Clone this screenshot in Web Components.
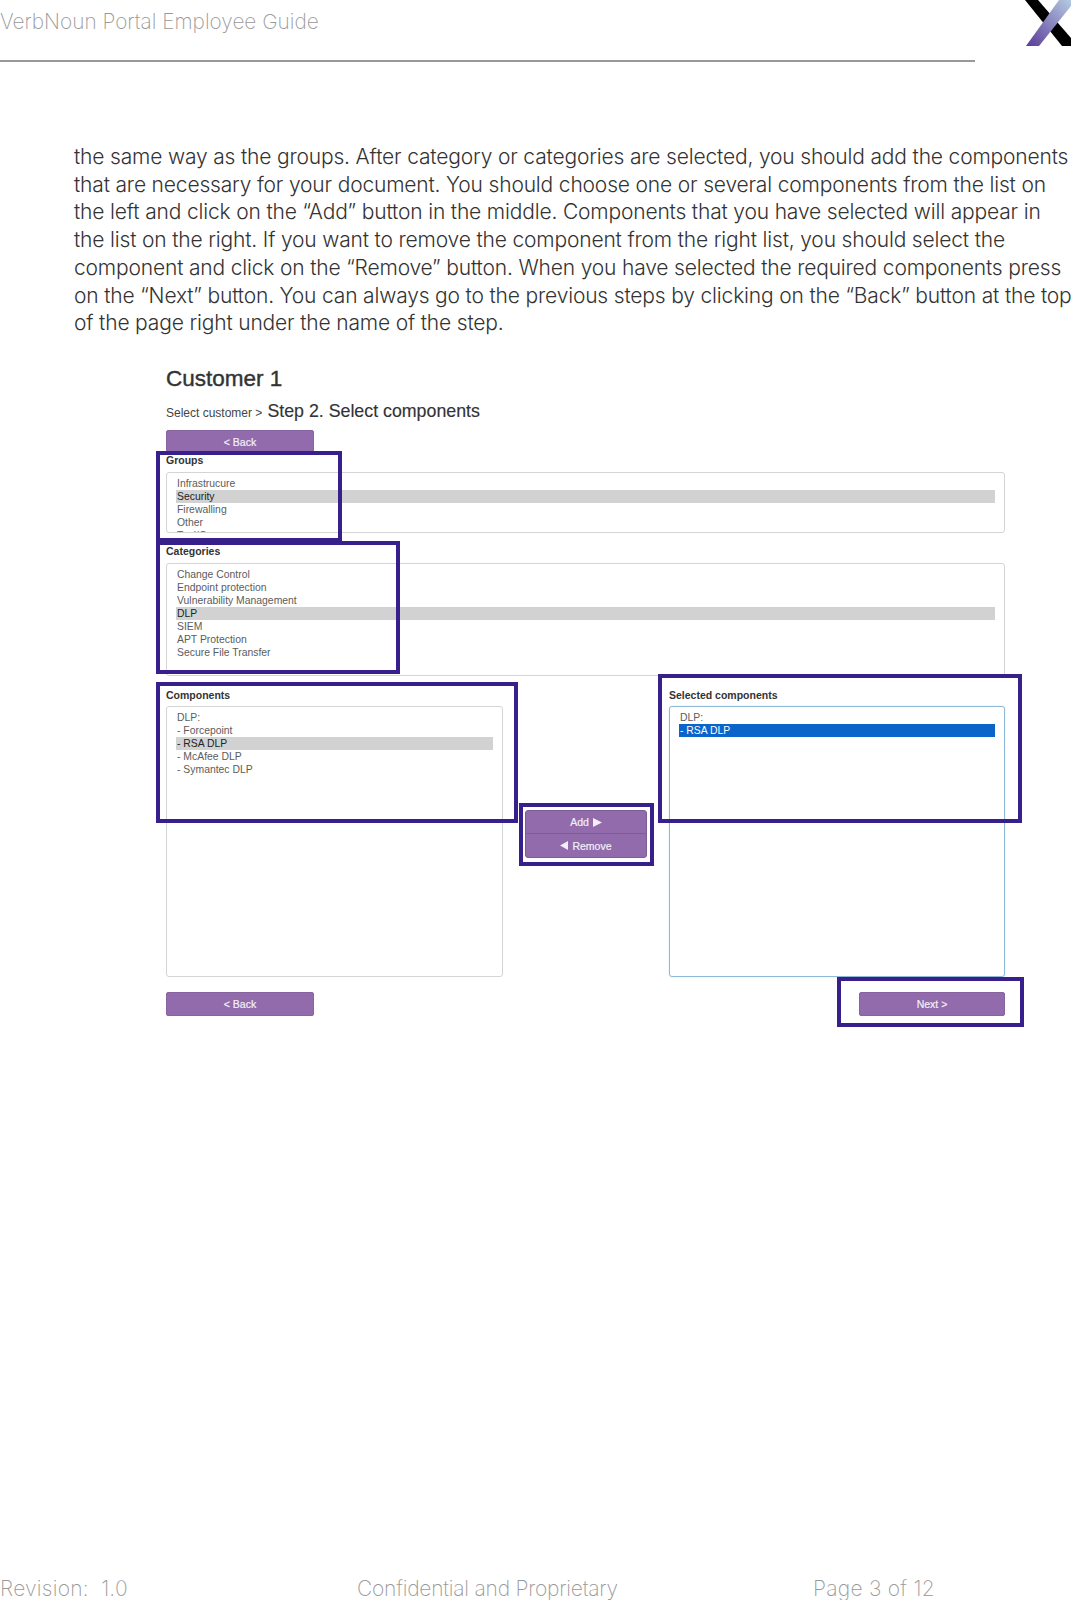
<!DOCTYPE html>
<html>
<head>
<meta charset="utf-8">
<title>VerbNoun Portal Employee Guide</title>
<style>
    html, body { margin: 0; padding: 0; background: #fff; }
    body { width: 1071px; height: 1600px; overflow: hidden; }
</style>
</head>
<body>
<guide-page>
    <guide-header slot="header">VerbNoun Portal Employee Guide</guide-header>
    <p>the same way as the groups. After category or categories are selected, you should add the components<br>that are necessary for your document. You should choose one or several components from the list on<br>the left and click on the “Add” button in the middle. Components that you have selected will appear in<br>the list on the right. If you want to remove the component from the right list, you should select the<br>component and click on the “Remove” button. When you have selected the required components press<br>on the “Next” button. You can always go to the previous steps by clicking on the “Back” button at the top<br>of the page right under the name of the step.</p>
    <wizard-shot>
        <wizard-list slot="groups" label="Groups" height="61">
            <list-option>Infrastrucure</list-option>
            <list-option selected>Security</list-option>
            <list-option>Firewalling</list-option>
            <list-option>Other</list-option>
            <list-option>Tool/C</list-option>
        </wizard-list>
        <wizard-list slot="categories" label="Categories" height="113">
            <list-option>Change Control</list-option>
            <list-option>Endpoint protection</list-option>
            <list-option>Vulnerability Management</list-option>
            <list-option selected>DLP</list-option>
            <list-option>SIEM</list-option>
            <list-option>APT Protection</list-option>
            <list-option>Secure File Transfer</list-option>
        </wizard-list>
        <wizard-list slot="components" label="Components" height="271" tight>
            <list-option>DLP:</list-option>
            <list-option>- Forcepoint</list-option>
            <list-option selected>- RSA DLP</list-option>
            <list-option>- McAfee DLP</list-option>
            <list-option>- Symantec DLP</list-option>
        </wizard-list>
        <wizard-list slot="chosen" label="Selected components" height="271" tight focused>
            <list-option>DLP:</list-option>
            <list-option active>- RSA DLP</list-option>
        </wizard-list>
    </wizard-shot>
    <guide-footer slot="footer"></guide-footer>
</guide-page>

<script>
class GuidePage extends HTMLElement {
    connectedCallback() {
        let shadow = this.attachShadow({ mode: "open" });
        shadow.innerHTML = `
            <style>
                :host {
                    display: flex;
                    flex-direction: column;
                    width: 1071px;
                    height: 1600px;
                    overflow: hidden;
                    font-family: "Inter", "Liberation Sans", sans-serif;
                    font-weight: 300;
                    color: #333;
                }
                ::slotted(p) {
                    margin: 143px 0 0 74px;
                    font-size: 21px;
                    letter-spacing: -0.17px;
                    line-height: 27.7px;
                    white-space: nowrap;
                }
                .footer { margin-top: auto; }
            </style>
            <slot name="header"></slot>
            <slot></slot>
            <div class="footer"><slot name="footer"></slot></div>
        `;
    }
}

class GuideHeader extends HTMLElement {
    connectedCallback() {
        let shadow = this.attachShadow({ mode: "open" });
        shadow.innerHTML = `
            <style>
                :host {
                    display: block;
                    position: relative;
                    height: 0;
                    font-size: 20.8px;
                    font-weight: 200;
                    color: #999;
                }
                .title { height: 60px; line-height: 44px; width: 975px; border-bottom: 2px solid #999; }
                svg { position: absolute; left: 1024px; top: 0; }
            </style>
            <div class="title"><slot></slot></div>
            <svg width="47" height="46" viewBox="0 0 47 46">
                <defs>
                    <linearGradient id="bar" x1="0" y1="1" x2="1" y2="0">
                        <stop offset="0" stop-color="#5a3a98"/>
                        <stop offset="1" stop-color="#b4cbe2"/>
                    </linearGradient>
                </defs>
                <path d="M1 0H14L47 38V46H38Z" fill="#000"/>
                <path d="M2 46H15L47 6V0H35Z" fill="url(#bar)"/>
            </svg>
        `;
    }
}

class GuideFooter extends HTMLElement {
    connectedCallback() {
        let shadow = this.attachShadow({ mode: "open" });
        shadow.innerHTML = `
            <style>
                :host {
                    display: grid;
                    grid-template-columns: 357px 456px 1fr;
                    height: 22px;
                    font-size: 21px;
                    font-weight: 200;
                    line-height: 22px;
                    color: #999;
                    white-space: pre;
                }
                .conf { letter-spacing: -0.22px; }
                .num { letter-spacing: 0.25px; }
            </style>
            <span class="num">Revision:  1.0</span>
            <span class="conf">Confidential and Proprietary</span>
            <span class="num">Page 3 of 12</span>
        `;
    }
}

class WizardButton extends HTMLElement {
    connectedCallback() {
        let shadow = this.attachShadow({ mode: "open" });
        shadow.innerHTML = `
            <style>
                :host {
                    display: flex;
                    align-items: center;
                    justify-content: center;
                    width: 148px;
                    height: 24px;
                    box-sizing: border-box;
                    background: #916bab;
                    border: 1px solid #8763a0;
                    border-radius: 2px;
                    color: #f4eff7;
                    font: 10.5px "Liberation Sans", sans-serif;
                    -webkit-text-stroke: 0.2px #f4eff7;
                }
                :host([short]) { width: 146px; }
            </style>
            <slot></slot>
        `;
    }
}

class ListOption extends HTMLElement {
    connectedCallback() {
        let shadow = this.attachShadow({ mode: "open" });
        shadow.innerHTML = `
            <style>
                :host {
                    display: block;
                    height: 13px;
                    line-height: 13px;
                    padding-left: 1px;
                    white-space: nowrap;
                    color: #5c5c5c;
                }
                :host([selected]) { background: #d2d2d2; color: #222; }
                :host([active]) { background: #0a64c9; color: #fff; }
            </style>
            <slot></slot>
        `;
    }
}

class WizardList extends HTMLElement {
    connectedCallback() {
        let shadow = this.attachShadow({ mode: "open" });
        shadow.innerHTML = `
            <style>
                :host {
                    display: block;
                    font: 10.4px "Liberation Sans", sans-serif;
                }
                label {
                    display: block;
                    height: 13px;
                    line-height: 13px;
                    margin-bottom: 5px;
                    font-size: 10.5px;
                    font-weight: bold;
                    color: #333;
                }
                :host([tight]) label { margin-bottom: 4px; }
                .box {
                    box-sizing: border-box;
                    height: ${this.getAttribute("height")}px;
                    padding: 4px 9px 0;
                    overflow: hidden;
                    background: #fff;
                    border: 1px solid #d4d4d4;
                    border-radius: 3px;
                }
                :host([focused]) .box { border-color: #8fb9d6; box-shadow: 0 0 2px #cfe4f2; }
            </style>
            <label>${this.getAttribute("label")}</label>
            <div class="box"><slot></slot></div>
        `;
    }
}

class WizardMark extends HTMLElement {
    connectedCallback() {
        let shadow = this.attachShadow({ mode: "open" });
        let [x, y, w, h] = this.getAttribute("box").split(" ");
        shadow.innerHTML = `
            <style>
                :host {
                    position: absolute;
                    left: ${x}px;
                    top: ${y}px;
                    width: ${w}px;
                    height: ${h}px;
                    box-sizing: border-box;
                    border: 4px solid #38208c;
                    pointer-events: none;
                }
            </style>
        `;
    }
}

class WizardShot extends HTMLElement {
    connectedCallback() {
        let shadow = this.attachShadow({ mode: "open" });
        shadow.innerHTML = `
            <style>
                :host {
                    display: block;
                    position: relative;
                    margin-top: 23px;
                    padding-left: 166px;
                    width: 839px;
                    font-family: "Liberation Sans", sans-serif;
                }
                h1 {
                    margin: 0;
                    padding-top: 4px;
                    height: 30px;
                    line-height: 30px;
                    font-size: 22.5px;
                    font-weight: normal;
                    color: #333;
                    -webkit-text-stroke: 0.4px #333;
                }
                .crumb {
                    display: flex;
                    align-items: baseline;
                    gap: 5px;
                    height: 30px;
                    margin-top: 2px;
                    line-height: 30px;
                    font-size: 12px;
                    color: #444;
                    white-space: nowrap;
                }
                .crumb b { font-size: 17.8px; font-weight: normal; color: #333; -webkit-text-stroke: 0.15px #333; }
                .back { margin-top: 4px; }
                .categories { margin-top: 12px; }
                .row { display: grid; grid-template-columns: 337px 122px 336px; column-gap: 22px; margin-top: 13px; }
                .middle { margin-top: 121px; }
                .pair {
                    height: 48px;
                    box-sizing: border-box;
                    display: flex;
                    flex-direction: column;
                    background: #916bab;
                    border: 1px solid #7d5c94;
                    border-radius: 3px;
                    color: #f4eff7;
                    font-size: 10.5px;
                    -webkit-text-stroke: 0.2px #f4eff7;
                }
                .pair div { flex: 1; display: flex; align-items: center; justify-content: center; gap: 4px; }
                .pair div + div { border-top: 1px solid #7d5c94; }
                .bottom { display: flex; justify-content: space-between; margin-top: 15px; }
                svg { display: block; }
            </style>
            <h1>Customer 1</h1>
            <div class="crumb"><span>Select customer &gt;</span><b>Step 2. Select components</b></div>
            <wizard-button class="back">&lt; Back</wizard-button>
            <div><slot name="groups"></slot></div>
            <div class="categories"><slot name="categories"></slot></div>
            <div class="row">
                <slot name="components"></slot>
                <div class="middle">
                    <div class="pair">
                        <div><span>Add</span><svg width="9" height="9" viewBox="0 0 9 9"><path d="M0 0L9 4.5L0 9Z" fill="#f4eff7"/></svg></div>
                        <div><svg width="8" height="9" viewBox="0 0 8 9"><path d="M8 0L0 4.5L8 9Z" fill="#f4eff7"/></svg><span>Remove</span></div>
                    </div>
                </div>
                <slot name="chosen"></slot>
            </div>
            <div class="bottom">
                <wizard-button>&lt; Back</wizard-button>
                <wizard-button short>Next &gt;</wizard-button>
            </div>
            <wizard-mark box="156 91 186 91"></wizard-mark>
            <wizard-mark box="156 181 244 133"></wizard-mark>
            <wizard-mark box="156 322 362 141"></wizard-mark>
            <wizard-mark box="519 443 135 63"></wizard-mark>
            <wizard-mark box="658 314 364 149"></wizard-mark>
            <wizard-mark box="837 617 187 50"></wizard-mark>
        `;
    }
}

customElements.define("guide-page", GuidePage);
customElements.define("guide-header", GuideHeader);
customElements.define("guide-footer", GuideFooter);
customElements.define("wizard-button", WizardButton);
customElements.define("list-option", ListOption);
customElements.define("wizard-list", WizardList);
customElements.define("wizard-mark", WizardMark);
customElements.define("wizard-shot", WizardShot);
</script>
</body>
</html>
